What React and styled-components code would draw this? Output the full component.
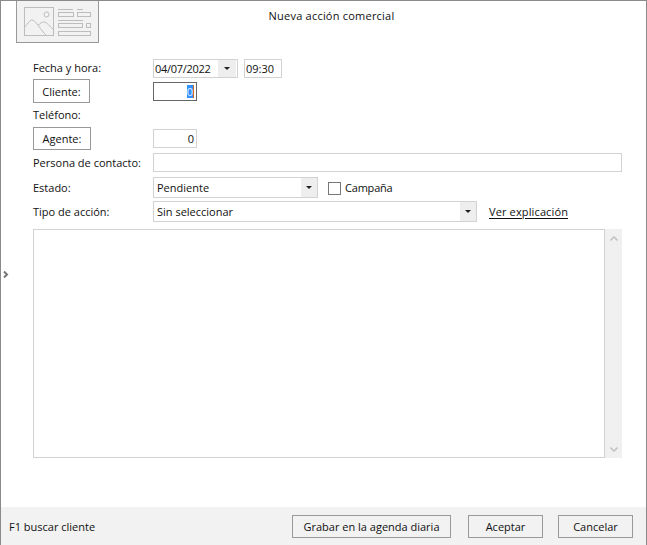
import React from 'react';
import styled, { createGlobalStyle } from 'styled-components';

const GlobalStyle = createGlobalStyle`
  html, body {
    margin: 0;
    padding: 0;
    background: #fff;
  }
  * {
    box-sizing: border-box;
  }
`;

const Windowed = styled.div`
  width: 647px;
  height: 545px;
  display: flex;
  flex-direction: column;
  position: relative;
  overflow: hidden;
  background: #fff;
  border-top: 1px solid #8a8a8a;
  border-left: 1px solid #8a8a8a;
  border-right: 1px solid #8a8a8a;
  font-family: "Open Sans", "Noto Sans", sans-serif;
  font-size: 11px;
  color: #111;
`;

const Header = styled.div`
  height: 58px;
  display: flex;
  align-items: flex-start;
  padding-left: 15px;
`;

const Logo = styled.div`
  width: 83px;
  height: 43px;
  margin-top: -1px;
  border: 1px solid #999;
  background: #f2f2f2;
  flex: none;
`;

const Title = styled.div`
  flex: 1;
  text-align: center;
  padding-top: 7px;
  padding-right: 82px;
  line-height: 15px;
  letter-spacing: 0.22px;
`;

const Form = styled.div`
  flex: 1;
  display: flex;
  flex-direction: column;
  padding-left: 32px;
  padding-right: 24px;
`;

const Row = styled.div`
  display: flex;
  align-items: center;
  height: ${(p) => p.$h}px;
  margin-top: ${(p) => p.$mt || 0}px;
`;

const LabelCell = styled.div`
  width: 120px;
  flex: none;
  padding-bottom: ${(p) => (p.$lift ? 2 : 0)}px;
`;

const Label = styled.span`
  line-height: 15px;
`;

const FieldButton = styled.div`
  width: ${(p) => p.$w}px;
  height: ${(p) => p.$h}px;
  border: 1px solid #999;
  background: #fff;
  display: flex;
  align-items: center;
  justify-content: center;
`;

const Input = styled.div`
  width: ${(p) => (p.$w ? `${p.$w}px` : 'auto')};
  flex: ${(p) => (p.$w ? 'none' : 1)};
  height: 19px;
  margin-left: ${(p) => p.$ml || 0}px;
  border: 1px solid ${(p) => (p.$focus ? '#666' : '#d2d2d2')};
  background: #fff;
  display: flex;
  align-items: center;
  justify-content: ${(p) => (p.$right ? 'flex-end' : 'flex-start')};
  padding: 0 ${(p) => (p.$right ? 2 : 1)}px 0 1px;
  line-height: 15px;
`;

const DateText = styled.span`
  flex: 1;
  letter-spacing: -0.3px;
`;

const Selection = styled.span`
  background: #3390ff;
  color: #e4f0ff;
  height: 13px;
  line-height: 13px;
  border-right: 1px solid #d06a1e;
`;

const DropButton = styled.div`
  width: ${(p) => p.$w}px;
  align-self: stretch;
  background: #eee;
  display: flex;
  align-items: center;
  justify-content: center;
  flex: none;
`;

const Caret = styled.span`
  width: 0;
  height: 0;
  border-left: 3.5px solid transparent;
  border-right: 3.5px solid transparent;
  border-top: 3.5px solid #222;
`;

const Select = styled.div`
  width: ${(p) => p.$w}px;
  height: 21px;
  flex: none;
  border: 1px solid #d2d2d2;
  background: #fff;
  display: flex;
  align-items: center;
  padding-left: 3px;
`;

const SelectText = styled.span`
  flex: 1;
  line-height: 15px;
`;

const Check = styled.div`
  width: 13px;
  height: 13px;
  margin: 1px 0 0 10px;
  border: 1px solid #777;
  background: #fff;
  flex: none;
`;

const CheckLabel = styled.span`
  margin-left: 4px;
  line-height: 15px;
  letter-spacing: -0.2px;
`;

const LinkText = styled.a`
  margin-left: 12px;
  color: #111;
  text-decoration: underline;
  text-underline-offset: 2px;
  line-height: 15px;
  letter-spacing: 0.13px;
`;

const NotesRow = styled.div`
  height: 229px;
  margin-top: 7px;
  display: flex;
`;

const Notes = styled.div`
  flex: 1;
  border: 1px solid #d2d2d2;
  background: #fff;
`;

const ScrollBar = styled.div`
  width: 17px;
  background: #f0f0f0;
  display: flex;
  flex-direction: column;
  justify-content: space-between;
  align-items: center;
  padding: 7px 0 6px;
`;

const Expander = styled.svg`
  position: absolute;
  left: 2px;
  top: 270px;
`;

const Footer = styled.div`
  height: 38px;
  background: #f2f2f2;
  display: flex;
  align-items: center;
  padding: 1px 13px 0 8px;
`;

const Hint = styled.span`
  flex: 1;
  line-height: 15px;
`;

const FooterButton = styled.div`
  width: ${(p) => p.$w}px;
  height: 23px;
  margin-left: ${(p) => p.$ml}px;
  border: 1px solid #999;
  background: #f2f2f2;
  display: flex;
  align-items: center;
  justify-content: center;
`;

const LogoArt = () => (
  <svg width="81" height="41" viewBox="0 0 81 41" fill="none" stroke="#bdbdbd" strokeWidth="1">
    <rect x="7.5" y="6.5" width="29" height="28" />
    <circle cx="29.5" cy="13.5" r="2.5" />
    <path d="M8 26 C11 22 13 19 15 19 C19 19 24 30 29 34 M21 25 C23 22 25 21 27 21 C30 21 33 26 36 28" />
    <path d="M41 8.5 H56 M60 8.5 H66" />
    <rect x="41.5" y="11.5" width="15" height="4" />
    <rect x="60.5" y="11.5" width="13" height="4" />
    <path d="M41 19.5 H66" />
    <rect x="41.5" y="22.5" width="24" height="4" />
    <rect x="69.5" y="22.5" width="4" height="4" />
    <rect x="41.5" y="30.5" width="32" height="4" />
  </svg>
);

const Chevron = ({ up }) => (
  <svg width="8" height="5" viewBox="0 0 8 5" fill="none" stroke="#c4c4c4" strokeWidth="1.6">
    <path d={up ? 'M0.5 4.5 L4 1 L7.5 4.5' : 'M0.5 0.5 L4 4 L7.5 0.5'} />
  </svg>
);

export default function App() {
  return (
    <>
      <GlobalStyle />
      <Windowed>
        <Header>
          <Logo>
            <LogoArt />
          </Logo>
          <Title>Nueva acción comercial</Title>
        </Header>
        <Form>
          <Row $h={19}>
            <LabelCell $lift>
              <Label>Fecha y hora:</Label>
            </LabelCell>
            <Input $w={85}>
              <DateText>04/07/2022</DateText>
              <DropButton $w={18}>
                <Caret />
              </DropButton>
            </Input>
            <Input $w={38} $ml={6}>
              09:30
            </Input>
          </Row>
          <Row $h={24} $mt={1}>
            <LabelCell>
              <FieldButton $w={57} $h={24}>
                Cliente:
              </FieldButton>
            </LabelCell>
            <Input $w={44} $focus $right>
              <Selection>0</Selection>
            </Input>
          </Row>
          <Row $h={24}>
            <LabelCell $lift>
              <Label>Teléfono:</Label>
            </LabelCell>
          </Row>
          <Row $h={23}>
            <LabelCell>
              <FieldButton $w={58} $h={23}>
                Agente:
              </FieldButton>
            </LabelCell>
            <Input $w={44} $right>
              0
            </Input>
          </Row>
          <Row $h={19} $mt={3}>
            <LabelCell>
              <Label>Persona de contacto:</Label>
            </LabelCell>
            <Input />
          </Row>
          <Row $h={21} $mt={5}>
            <LabelCell>
              <Label>Estado:</Label>
            </LabelCell>
            <Select $w={165}>
              <SelectText>Pendiente</SelectText>
              <DropButton $w={16}>
                <Caret />
              </DropButton>
            </Select>
            <Check />
            <CheckLabel>Campaña</CheckLabel>
          </Row>
          <Row $h={21} $mt={3}>
            <LabelCell>
              <Label>Tipo de acción:</Label>
            </LabelCell>
            <Select $w={324}>
              <SelectText>Sin seleccionar</SelectText>
              <DropButton $w={16}>
                <Caret />
              </DropButton>
            </Select>
            <LinkText>Ver explicación</LinkText>
          </Row>
          <NotesRow>
            <Notes />
            <ScrollBar>
              <Chevron up />
              <Chevron />
            </ScrollBar>
          </NotesRow>
        </Form>
        <Footer>
          <Hint>F1 buscar cliente</Hint>
          <FooterButton $w={159} $ml={0}>
            Grabar en la agenda diaria
          </FooterButton>
          <FooterButton $w={75} $ml={17}>
            Aceptar
          </FooterButton>
          <FooterButton $w={75} $ml={15}>
            Cancelar
          </FooterButton>
        </Footer>
        <Expander width="6" height="7" viewBox="0 0 6 7" fill="none" stroke="#777" strokeWidth="2">
          <path d="M1 0.5 L4 3.5 L1 6.5" />
        </Expander>
      </Windowed>
    </>
  );
}
